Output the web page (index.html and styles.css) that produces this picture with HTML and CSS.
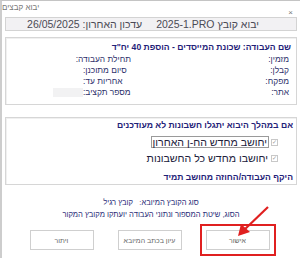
FILE: index.html
```html
<!DOCTYPE html>
<html lang="he" dir="rtl">

<head>
  <meta charset="UTF-8" />
  <title>יבוא קבצים</title>
  <link rel="stylesheet" href="styles.css">
</head>

<body>
  <div id="window">
    <div id="titleBar">
      <span class="close">×</span>
      <span class="title">יבוא קבצים</span>
    </div>

    <div id="fileHeader">
      <span>יבוא קובץ <bdi dir="ltr">2025-1.PRO</bdi></span>
      <span>עדכון האחרון: <bdi dir="ltr">26/05/2025</bdi></span>
    </div>

    <div class="panel" id="jobPanel">
      <div class="panel-title">שם העבודה: שכונת המייסדים - הוספת 40 יח"ד</div>
      <div class="fields">
        <span class="label">מזמין:</span><span class="value"></span>
        <span class="label end">תחילת העבודה:</span><span class="value"></span>
        <span class="label">קבלן:</span><span class="value"></span>
        <span class="label end">סיום מתוכנן:</span><span class="value"></span>
        <span class="label">מפקח:</span><span class="value"></span>
        <span class="label end">אחריות עד:</span><span class="value"></span>
        <span class="label">אתר:</span><span class="value"></span>
        <span class="label end">מספר תקציב:</span><span class="value field"></span>
      </div>
    </div>

    <div class="panel" id="accountsPanel">
      <div class="panel-title">אם במהלך היבוא יתגלו חשבונות לא מעודכנים</div>
      <div class="checks">
        <label class="check"><span class="box">✓</span><span class="text focused">יחושב מחדש הח-ן האחרון</span></label>
        <label class="check"><span class="box">✓</span><span class="text">יחושבו מחדש כל החשבונות</span></label>
      </div>
      <div class="panel-title">היקף העבודה/החוזה מחושב תמיד</div>
    </div>

    <div id="info">
      <div>סוג הקובץ המיובא:&nbsp;&nbsp; קובץ רגיל</div>
      <div>הסוג, שיטת המספור ונתוני העבודה יועתקו מקובץ המקור</div>
    </div>

    <div id="buttons">
      <button class="btn highlighted">אישור</button>
      <button class="btn">עיון בכתב המיובא</button>
      <button class="btn">ויתור</button>
    </div>

    <!-- annotation arrow -->
    <svg id="arrow" width="300" height="258" viewBox="0 0 300 258">
      <line x1="268" y1="207" x2="243" y2="231" stroke="#e02020" stroke-width="2.2" />
      <polygon points="238,236 241,224 250,232" fill="#e02020" />
    </svg>
  </div>
</body>

</html>
```

FILE: styles.css
```css
* {
  margin: 0;
  padding: 0;
  box-sizing: border-box;
}

html,
body {
  background: #fff;
  font-family: 'Liberation Sans', 'DejaVu Sans', sans-serif;
  width: 300px;
  height: 258px;
  overflow: hidden;
}

#window {
  position: relative;
  width: 300px;
  height: 258px;
  border-top: 1px solid #c4c4c4;
  border-left: 2px solid #cdcdcd;
  display: flex;
  flex-direction: column;
}

#titleBar {
  height: 16px;
  display: flex;
  justify-content: space-between;
  padding: 0 7px 0 0;
}

#titleBar .title {
  font-size: 8px;
  color: #777;
  padding-top: 2px;
}

#titleBar .close {
  font-size: 8px;
  color: #777;
  align-self: flex-end;
  line-height: 8px;
  margin-bottom: 0;
}

#fileHeader {
  margin: 0 3px;
  height: 14px;
  background: #f2f1f3;
  border: 1px solid #d3d3d3;
  display: flex;
  gap: 14px;
  padding-right: 37px;
  align-items: center;
  font-size: 10.5px;
  color: #4a4a55;
  line-height: 12px;
}

.panel {
  margin: 6px 3px 0 3px;
  height: 68px;
  border: 1px solid #d6d6d6;
  box-shadow: inset 1px 1px 0 #f0f0f0;
  background: #fff;
}

.panel-title {
  font-size: 8.6px;
  font-weight: bold;
  color: #1f2278;
  line-height: 12px;
}

#jobPanel {
  padding: 3px 5px 0 45px;
}

.fields {
  display: grid;
  grid-template-columns: 30px 1fr 50px 30px;
  grid-auto-rows: 11px;
  margin-top: 1px;
  font-size: 8.4px;
  color: #2d2f6a;
  line-height: 11px;
  padding-left: 2px;
}

.fields .label {
  white-space: nowrap;
  padding-right: 2px;
}

.fields .label.end {
  text-align: left;
}

.fields .field {
  background: #f2f2f3;
  height: 9px;
  margin-top: 1px;
}

#accountsPanel {
  margin-top: 12px;
  padding: 1px 3px 0 5px;
}

.checks {
  display: flex;
  flex-direction: column;
  gap: 4px;
  padding: 5px 15px 7px 0;
}

.check {
  display: flex;
  align-items: center;
  gap: 2px;
  height: 12px;
  font-size: 10.6px;
  color: #20203a;
}

.check .box {
  width: 7px;
  height: 7px;
  border: 1px solid #c8c8c8;
  font-size: 6px;
  line-height: 5px;
  color: #9a9a9a;
  text-align: center;
}

.check .text {
  line-height: 12px;
  padding: 0 1px;
  white-space: nowrap;
}

.check .text.focused {
  border: 1px solid #9a9a9a;
  line-height: 10px;
}

#info {
  margin-top: 12px;
  text-align: center;
  font-size: 7.6px;
  line-height: 12px;
  color: #2a2d78;
}

#buttons {
  margin-top: 9px;
  display: flex;
  justify-content: center;
  gap: 24px;
  padding-right: 3px;
}

.btn {
  width: 64px;
  height: 20px;
  background: #fff;
  border: 1px solid #cfcfcf;
  font-family: inherit;
  font-size: 7px;
  color: #666;
}

.btn.highlighted {
  outline: 2px solid #e02020;
  outline-offset: 4px;
}

#arrow {
  position: absolute;
  top: -1px;
  left: -2px;
  pointer-events: none;
}
```
